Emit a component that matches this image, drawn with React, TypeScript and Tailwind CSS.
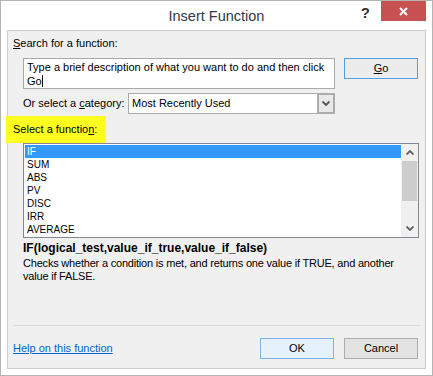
import React from "react";

const items = ["IF", "SUM", "ABS", "PV", "DISC", "IRR", "AVERAGE"];

function Chevron({ up = false, color = "#5f5f5f" }: { up?: boolean; color?: string }) {
    return (
        <svg width="8" height="5" viewBox="0 0 8 5" className="block">
            <path
                d={up ? "M0.5 4.5 L4 1 L7.5 4.5" : "M0.5 0.5 L4 4 L7.5 0.5"}
                fill="none"
                stroke={color}
                strokeWidth="1.8"
            />
        </svg>
    );
}

export default function App() {
    return (
        <div
            className="w-[433px] h-[376px] bg-white border border-[#b4b4b4] flex flex-col text-[11px] text-black"
            style={{ fontFamily: '"Liberation Sans", Arial, sans-serif' }}
        >
            {/* title bar */}
            <div className="h-[29px] grid grid-cols-[1fr_auto_1fr] items-start">
                <div />
                <div className="text-[14.5px] text-[#2f3a48] leading-[28px] pt-[1px]">Insert Function</div>
                <div className="flex justify-end items-start pr-[6px]">
                    <span className="text-[15px] font-bold text-[#333] leading-[24px] mr-[11px]">?</span>
                    <button className="w-[45px] h-[20px] bg-[#c75050] flex items-center justify-center">
                        <svg width="9" height="9" viewBox="0 0 9 9">
                            <path d="M1 1 L8 8 M8 1 L1 8" stroke="#fff" strokeWidth="2" />
                        </svg>
                    </button>
                </div>
            </div>

            {/* client area */}
            <div className="flex-1 ml-[6px] mr-[6px] mb-[6px] border border-[#cdcdcd] bg-[#f0f0f0] flex flex-col">
                <div className="ml-[5px] mt-[5px] h-[14px] leading-[14px]">
                    <u>S</u>earch for a function:
                </div>

                <div className="flex mt-[8px] ml-[15px] items-start">
                    <div className="w-[312px] h-[31px] bg-white border border-[#a9a9a9] pl-[3px] pt-[1px] leading-[14px]">
                        Type a brief description of what you want to do and then click
                        <br />
                        Go<span className="inline-block w-px h-[12px] bg-black align-[-2px]" />
                    </div>
                    <button className="ml-[9px] w-[74px] h-[21px] border border-[#4f9fe6] bg-[#ececec] leading-[19px]">
                        <u>G</u>o
                    </button>
                </div>

                <div className="flex mt-[4px] ml-[15px] items-center">
                    <div className="w-[105px]">
                        Or select a <u>c</u>ategory:
                    </div>
                    <div className="w-[207px] h-[21px] bg-white border border-[#acacac] flex">
                        <div className="flex-1 pl-[3px] leading-[19px]">Most Recently Used</div>
                        <div className="w-[18px] -my-px -mr-px border-2 border-[#acacac] bg-[#e9e9e9] flex items-center justify-center">
                            <Chevron color="#505050" />
                        </div>
                    </div>
                </div>

                <div className="mt-[2px] -ml-[2px] w-[100px] h-[27px] bg-[#ffff1f] pl-[7px] flex items-center">
                    <span>
                        Select a functio<u>n</u>:
                    </span>
                </div>

                <div className="ml-[15px] w-[396px] h-[95px] bg-white border border-[#828790] flex">
                    <div className="flex-1 pt-px pl-px flex flex-col text-[10px]">
                        {items.map((it, i) => (
                            <div
                                key={it}
                                className={
                                    "h-[13px] leading-[13px] pl-[2px] " +
                                    (i === 0 ? "bg-[#3399ff] text-white" : "")
                                }
                            >
                                {it}
                            </div>
                        ))}
                    </div>
                    <div className="w-[17px] bg-[#f0f0f0] flex flex-col">
                        <div className="h-[17px] flex items-center justify-center">
                            <Chevron up color="#606060" />
                        </div>
                        <div className="h-[40px] mx-px bg-[#cdcdcd]" />
                        <div className="flex-1" />
                        <div className="h-[17px] flex items-center justify-center">
                            <Chevron color="#606060" />
                        </div>
                    </div>
                </div>

                <div className="ml-[15px] mt-[3px] h-[14px] leading-[14px] font-bold text-[12px]">
                    IF(logical_test,value_if_true,value_if_false)
                </div>
                <div className="ml-[15px] mt-[2px] w-[396px] leading-[13px] tracking-[-0.2px]">
                    Checks whether a condition is met, and returns one value if TRUE, and another
                    <br />
                    value if FALSE.
                </div>

                <div className="mt-[42px] ml-[5px] w-[407px] h-px bg-[#dadada]" />

                <div className="mt-[12px] ml-[5px] mr-[7px] flex items-center">
                    <a className="text-[#0066cc] underline cursor-pointer">Help on this function</a>
                    <div className="flex-1" />
                    <button className="w-[74px] h-[21px] border border-[#7eb4ea] bg-[#e5f1fb] leading-[19px]">OK</button>
                    <button className="ml-[10px] w-[74px] h-[21px] border border-[#adadad] bg-[#e3e3e3] leading-[19px]">
                        Cancel
                    </button>
                </div>
            </div>
        </div>
    );
}
